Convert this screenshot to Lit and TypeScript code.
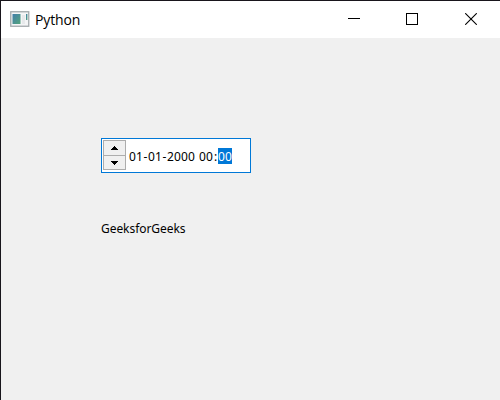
import { LitElement, html, css } from "lit";
import { customElement, state } from "lit/decorators.js";

@customElement("date-time-spin")
class DateTimeSpin extends LitElement {
  static styles = css`
    :host { display: block; width: 150px; height: 35px; }
    .field {
      box-sizing: border-box; width: 150px; height: 35px; padding: 1px;
      display: flex; background: #fff; border: 1px solid #0078d7;
    }
    .buttons { display: flex; flex-direction: column; width: 23px; height: 30px; }
    .button {
      box-sizing: border-box; flex: none; height: 16px; width: 23px; padding-top: 5px;
      border: 1px solid #adadad; background: #f0f0f0;
      display: flex; align-items: flex-start; justify-content: center;
    }
    .button + .button { margin-top: -1px; height: 15px; }
    svg { display: block; shape-rendering: crispEdges; }
    .value {
      display: flex; align-items: center; margin-left: 3px; height: 32px;
      font: 12px/16px "Noto Sans", sans-serif; color: #000; white-space: pre;
    }
    .value span { box-sizing: border-box; height: 16px; line-height: 18px; }
    .digits { letter-spacing: 0.14px; }
    .separator { width: 5px; text-align: center; }
    .space { width: 4px; }
    .selected { width: 14px; background: #0078d7; color: #fff; letter-spacing: 0.14px; }
  `;
  @state() private stamp = "01-01-2000 00:";
  @state() private minutes = "00";
  render() {
    const parts = this.stamp.match(/\d+|\D/g) ?? [];
    return html`<div class="field">
      <div class="buttons">
        <div class="button"><svg width="7" height="4" viewBox="0 0 7 4"><path d="M3 0h1v1h1v1h1v1h1v1H0V3h1V2h1V1h1z"/></svg></div>
        <div class="button"><svg width="7" height="4" viewBox="0 0 7 4"><path d="M0 0h7v1H6v1H5v1H4v1H3V3H2V2H1V1H0z"/></svg></div>
      </div>
      <div class="value">${parts.map((p) => html`<span class=${p === " " ? "space" : /\d/.test(p) ? "digits" : "separator"}>${p}</span>`)}<span class="selected">${this.minutes}</span></div>
    </div>`;
  }
}

@customElement("app-root")
class AppRoot extends LitElement {
  static styles = css`
    :host { display: block; }
    .window {
      box-sizing: border-box; width: 500px; height: 400px; overflow: hidden;
      background: #f0f0f0; border-top: 1px solid #18151b; border-left: 1px solid #18151b;
    }
    .bar { height: 37px; background: #fff; display: flex; align-items: flex-start; }
    .bar svg { display: block; flex: none; }
    .logo { margin: 10px 0 0 9px; }
    .title { margin: 9px 0 0 5px; flex: 1; font: 14px/20px "Open Sans", sans-serif; letter-spacing: -0.15px; color: #000; }
    .controls { display: flex; gap: 46px; margin: 12px 23px 0 0; }
    .close { margin-left: 1px; }
    .content { padding: 100px 0 0 100px; display: flex; flex-direction: column; gap: 48px; }
    .label { font: 12px/16px "Noto Sans", sans-serif; letter-spacing: -0.06px; color: #000; }
  `;
  render() {
    return html`<div class="window">
      <div class="bar">
        <svg class="logo" width="20" height="16" viewBox="0 0 20 16">
          <defs><linearGradient id="g" x2="1" y2="1"><stop stop-color="#427eaa"/><stop offset="1" stop-color="#55a57c"/></linearGradient></defs>
          <rect x=".75" y=".75" width="18" height="14.5" fill="#f4f5f6" stroke="#a3a9ac" stroke-width="1.3"/>
          <rect x="2.5" y="3" width="8" height="10" fill="url(#g)"/>
          <rect x="12" y="4" width="3" height="9" fill="#e7e9eb"/>
          <rect x="16" y="3" width="1.4" height="6" fill="url(#g)"/>
        </svg>
        <span class="title">Python</span>
        <div class="controls" role="group">
          <svg width="12" height="12" viewBox="0 0 12 12" shape-rendering="crispEdges"><path d="M0 5h12v1H0z"/></svg>
          <svg width="12" height="12" viewBox="0 0 12 12" shape-rendering="crispEdges"><path d="M.5.5h11v11H.5z" fill="none" stroke="#000"/></svg>
          <svg class="close" width="12" height="12" viewBox="0 0 12 12"><path d="M.2.2l11.6 11.6M11.8.2L.2 11.8" fill="none" stroke="#000" stroke-width="1.1"/></svg>
        </div>
      </div>
      <div class="content">
        <date-time-spin></date-time-spin>
        <div class="label">GeeksforGeeks</div>
      </div>
    </div>`;
  }
}
